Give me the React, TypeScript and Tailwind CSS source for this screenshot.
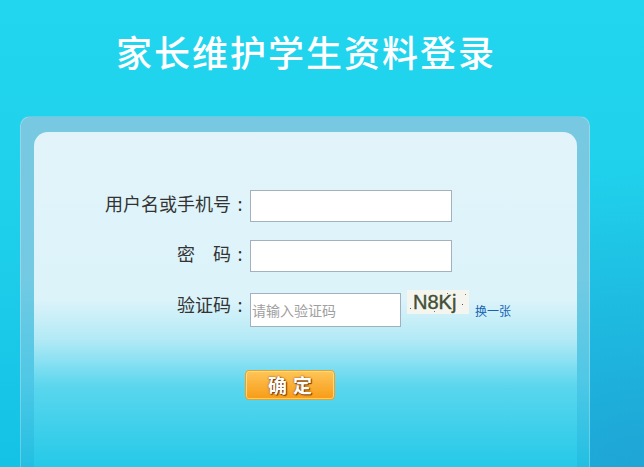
import React from 'react';

const Label: React.FC<{ text: string; className?: string }> = ({ text, className }) => (
  <label className={`w-[216px] pr-[1px] flex justify-end text-[18px] leading-[20px] text-[#333] ${className ?? ''}`}>
    <span>{text}</span>
    <span className="inline-block w-[18px] text-center">:</span>
  </label>
);

const App: React.FC = () => {
  return (
    <div
      className="w-[644px] h-[467px] overflow-hidden bg-[radial-gradient(ellipse_at_100%_100%,rgba(40,140,200,0.55)_0%,rgba(40,140,200,0)_45%),linear-gradient(180deg,#22d6ef_0%,#1fd0eb_45%,#14c2e5_100%)]"
      style={{ fontFamily: '"Noto Sans CJK SC", "Noto Sans", sans-serif' }}
    >
      <div className="ml-[20px] w-[570px] h-[116px] pt-[33px] text-center">
        <h1 className="text-[36px] leading-[36px] tracking-[2px] text-white font-medium pl-[2px]">
          家长维护学生资料登录
        </h1>
      </div>

      <div className="ml-[20px] w-[570px] h-[351px] rounded-t-[10px] pt-[15px] pl-[13px] pr-[12px] border-x border-t border-[rgba(255,255,255,0.25)] bg-[linear-gradient(180deg,#78c8e1_0%,#74cae3_45%,#4fc8e6_75%,#22bfe2_100%)]">
        <div className="h-full rounded-t-[14px] pt-[58px] bg-[linear-gradient(180deg,#e2f4fa_0%,#dcf3fa_50%,#b2eaf6_62%,#5ad6ee_76%,#25c9e8_100%)]">
          <div className="flex items-start">
            <Label text="用户名或手机号" className="mt-[3px]" />
            <input
              type="text"
              className="w-[202px] h-[32px] border border-[#a3b1bf] bg-white px-[3px] text-[14px] outline-none"
            />
          </div>

          <div className="flex items-start mt-[18px]">
            <Label text="密　码" className="mt-[3px]" />
            <input
              type="password"
              className="w-[202px] h-[32px] border border-[#a3b1bf] bg-white px-[3px] text-[14px] outline-none"
            />
          </div>

          <div className="flex items-start mt-[21px]">
            <Label text="验证码" className="mt-[1px]" />
            <input
              type="text"
              placeholder="请输入验证码"
              className="w-[151px] h-[34px] border border-[#a3b1bf] bg-white px-[1px] text-[14px] outline-none placeholder:text-[#a0a0a0]"
            />
            <div className="relative ml-[6px] -mt-[3px] w-[62px] h-[24px] bg-[#f5f5ef] overflow-hidden">
              <span
                className="absolute left-[6px] top-[0px] text-[20px] leading-[24px] text-[#434f36] [-webkit-text-stroke:0.4px_#434f36]"
                style={{ fontFamily: '"Liberation Sans", Arial, sans-serif' }}
              >
                N8Kj
              </span>
              <span className="absolute left-[3px] top-[18px] w-[1px] h-[1px] bg-[#555]" />
              <span className="absolute left-[40px] top-[3px] w-[1px] h-[1px] bg-[#666]" />
              <span className="absolute left-[55px] top-[14px] w-[1px] h-[1px] bg-[#555]" />
              <span className="absolute left-[27px] top-[21px] w-[1px] h-[1px] bg-[#777]" />
              <span className="absolute left-[58px] top-[4px] w-[1px] h-[1px] bg-[#777]" />
            </div>
            <a className="ml-[6px] mt-[10px] text-[12px] leading-[16px] text-[#1463b4] cursor-pointer">
              换一张
            </a>
          </div>

          <div className="mt-[43px] pl-[211px]">
            <button
              type="button"
              className="w-[90px] h-[30px] rounded-[4px] border border-[#f0a020] shadow-[inset_0_0_0_1px_rgba(255,230,150,0.7)] bg-[linear-gradient(180deg,#fdc65a_0%,#fbb23a_45%,#f79c17_100%)] text-white text-[19px] leading-[28px] font-bold tracking-[6px] pl-[6px] [text-shadow:0_0_2px_#7a3a00,1px_1px_1px_#7a3a00]"
            >
              确定
            </button>
          </div>
        </div>
      </div>
    </div>
  );
};

export default App;
